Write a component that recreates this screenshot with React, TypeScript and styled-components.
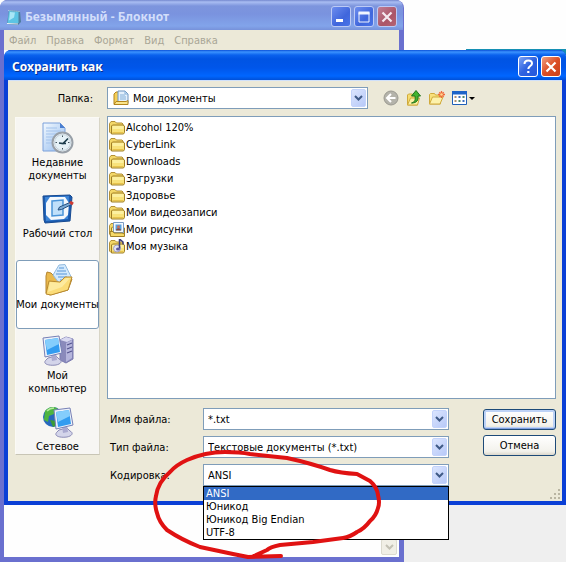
import React from "react";
import styled, { createGlobalStyle, css } from "styled-components";

const GlobalStyle = createGlobalStyle`
  * { box-sizing: border-box; }
  body {
    margin: 0;
    font: 11px/13px "DejaVu Sans Condensed", "Noto Sans", sans-serif;
    color: #000;
  }
  button, input, select { font: inherit; color: inherit; }
`;

/* ---------- desktop and windows ---------- */

const Desktop = styled.main`
  position: relative;
  min-height: 100vh;
  overflow: hidden;
  background: linear-gradient(#fefefe 500px, #efefef 500px);
`;

const Taskline = styled.div`
  position: absolute;
  top: 49px;
  right: 0;
  width: 100px;
  height: 6px;
  background: #1590b4;
`;

const NotepadWindow = styled.section`
  display: flex;
  flex-direction: column;
  width: calc(100% - 162px);
  height: 100vh;
  min-height: 562px;
  border: solid #6a70cf;
  border-width: 0 5px 5px 4px;
  border-radius: 8px 8px 0 0;
  background: #6a70cf;
`;

const DialogWindow = styled.section`
  position: absolute;
  top: 50px;
  left: 4px;
  right: 0;
  border: solid #0a3fd6;
  border-width: 0 4px 4px;
  border-radius: 7px 7px 0 0;
  background: #0a3fd6;
`;

const TitleBar = styled.header<{ $active?: boolean }>`
  display: flex;
  align-items: center;
  gap: 3px;
  height: 30px;
  margin: 0 -4px;
  border-radius: 7px 7px 0 0;
  ${(p) =>
    p.$active
      ? css`
          padding: 3px 5px 0 8px;
          background: linear-gradient(#0a50d8, #3b93ff 2px, #0a62ee 5px, #0054e3 9px, #0056ea 18px, #0066ff 26px, #0050d8);
        `
      : css`
          padding: 3px 6px 0;
          background: linear-gradient(#7488cf, #a9bdf2 2px, #7d95dd 6px, #7a93df 14px, #82a4ea 26px, #7792da);
        `}
`;

const Title = styled.h1<{ $active?: boolean }>`
  flex: 1;
  margin: 0;
  font: bold 12px/18px "Noto Sans", sans-serif;
  white-space: nowrap;
  color: ${(p) => (p.$active ? "#fff" : "#d3defa")};
  text-shadow: ${(p) => (p.$active ? "1px 1px #0a2f8c" : "none")};
`;

const CaptionButton = styled.button<{ $kind: "dim" | "dimClose" | "blue" | "red" }>`
  display: grid;
  place-items: center;
  width: 20px;
  height: 21px;
  padding: 0;
  border: 1px solid ${(p) => (p.$kind.startsWith("dim") ? "#bccaf5" : "#fff")};
  border-radius: 3px;
  background: ${(p) =>
    ({
      dim: "linear-gradient(135deg, #6d8dee, #3f66dc 60%, #4a74e8)",
      dimClose: "linear-gradient(135deg, #c07e95, #ab5568 60%, #b56475)",
      blue: "linear-gradient(135deg, #7ea4f5, #2f62e0 50%, #2458dc)",
      red: "linear-gradient(135deg, #f0a083, #dc4e26 50%, #c9401a)",
    })[p.$kind]};
`;

const MenuBar = styled.nav`
  display: flex;
  gap: 10px;
  height: 20px;
  padding: 3px 5px;
  background: #ece9d8;
`;

const MenuItem = styled.button`
  padding: 0;
  border: 0;
  background: none;
  color: #a9a696;
`;

const TextArea = styled.div`
  display: flex;
  flex: 1;
  align-items: flex-end;
  justify-content: flex-end;
  padding: 2px;
  background: #fefefe;
`;

const ScrollDown = styled.button`
  display: grid;
  place-items: center;
  width: 16px;
  height: 16px;
  padding: 0;
  border: 1px solid #dcdace;
  border-radius: 2px;
  background: #f1efe6;
`;

/* ---------- dialog contents ---------- */

const DialogBody = styled.form`
  display: grid;
  grid-template-columns: 85px 1fr;
  column-gap: 7px;
  row-gap: 7px;
  padding: 7px 6px 15px 7px;
  background: #ece9d8;
  box-shadow: inset 0 1px #cfe0fa;
`;

const LookInLabel = styled.label`
  align-self: center;
  justify-self: end;
  padding-right: 7px;
`;

const LookInRow = styled.div`
  display: flex;
  align-items: center;
  gap: 15px;
`;

const Combo = styled.div`
  display: grid;
  flex: 1;
  align-items: center;
  height: 22px;
  border: 1px solid #7f9db9;
  background: #fff;
  > * { grid-area: 1 / 1; }
`;

const LookInCombo = styled(Combo)`
  max-width: 261px;
`;

const ComboIcon = styled.span`
  display: flex;
  padding-left: 5px;
  pointer-events: none;
`;

const fieldText = css<{ $iconed?: boolean }>`
  width: 100%;
  height: 20px;
  padding: 0 20px 0 ${(p) => (p.$iconed ? 25 : 4)}px;
  border: 0;
  outline: 0;
  background: transparent;
`;

const Select = styled.select`
  ${fieldText}
  appearance: none;
`;

const TextInput = styled.input`
  ${fieldText}
`;

const Arrow = styled.span`
  display: grid;
  place-items: center;
  justify-self: end;
  width: 15px;
  height: 18px;
  margin-right: 1px;
  border: 1px solid #c3d3fb;
  border-radius: 2px;
  background: linear-gradient(135deg, #dbe5fe, #b7c9f8);
  pointer-events: none;
`;

const Tools = styled.div`
  display: flex;
  align-items: center;
  gap: 7px;
  margin-right: auto;
`;

const ToolButton = styled.button`
  display: flex;
  padding: 0;
  border: 0;
  background: none;
`;

const Places = styled.nav`
  display: flex;
  flex-direction: column;
  gap: 2px;
  grid-row: 2 / 4;
  align-self: start;
  margin-top: 1px;
  border: 1px solid #fff;
  border-color: #fbfaf5 #d8d5c6 #c8c5b5 #fbfaf5;
  background: #f7f6f3;
`;

const Place = styled.button<{ $selected?: boolean }>`
  display: flex;
  flex-direction: column;
  align-items: center;
  gap: 2px;
  min-height: 69px;
  padding: 3px 0 0;
  border: 1px solid ${(p) => (p.$selected ? "#7f9db9" : "transparent")};
  border-radius: 3px;
  background: ${(p) => (p.$selected ? "#fff" : "none")};
  white-space: pre;
  &:last-child { min-height: 0; }
`;

const FileList = styled.ul`
  height: 283px;
  margin: 0;
  padding: 2px 1px;
  border: 1px solid #7f9db9;
  background: #fff;
  list-style: none;
`;

const FileItem = styled.li`
  display: flex;
  align-items: center;
  gap: 1px;
  height: 17px;
`;

const Footer = styled.div`
  display: grid;
  grid-template-columns: 1fr 73px;
  column-gap: 34px;
  padding-top: 2px;
`;

const Fields = styled.div`
  display: grid;
  grid-template-columns: 93px 1fr;
  row-gap: 6px;
  align-items: center;
  padding-left: 3px;
`;

const EncodingCell = styled.div`
  position: relative;
`;

const OptionList = styled.ul`
  position: absolute;
  z-index: 1;
  top: 100%;
  left: 0;
  right: 0;
  margin: 0;
  padding: 0;
  border: 1px solid #000;
  background: #fff;
  list-style: none;
`;

const OptionItem = styled.li<{ $selected?: boolean }>`
  height: 13px;
  padding-left: 2px;
  background: ${(p) => (p.$selected ? "#316ac5" : "#fff")};
  color: ${(p) => (p.$selected ? "#fff" : "#000")};
`;

const Actions = styled.div`
  display: flex;
  flex-direction: column;
  gap: 5px;
  padding-top: 1px;
`;

const PushButton = styled.button<{ $primary?: boolean }>`
  height: 21px;
  padding: 0;
  border: 1px solid #1d4a78;
  border-radius: 3px;
  background: linear-gradient(#fff, #f3f2ec 80%, #dcd8cc);
  box-shadow: ${(p) => (p.$primary ? "inset 0 -1px #7f9fe0, inset 0 0 0 2px #bdd2f6" : "none")};
`;

const Grip = styled.svg`
  position: absolute;
  right: 1px;
  bottom: 1px;
`;

const Marker = styled.svg`
  position: absolute;
  z-index: 2;
  top: 395px;
  left: 142px;
  pointer-events: none;
`;

/* ---------- icons ---------- */

const Chevron = ({ color = "#3f5a86" }: { color?: string }) => (
  <svg width="9" height="6" viewBox="0 0 9 6">
    <path d="M1 1l3.5 3.5L8 1" fill="none" stroke={color} strokeWidth="2" />
  </svg>
);

const CloseGlyph = ({ color = "#fff" }: { color?: string }) => (
  <svg width="12" height="12" viewBox="0 0 12 12">
    <path d="M1.5 1.5l9 9M10.5 1.5l-9 9" stroke={color} strokeWidth="2.2" />
  </svg>
);

const NotepadIcon = () => (
  <svg width="16" height="16" viewBox="0 0 16 16">
    <path d="M3 1l11 1 1 11-3 3-11-1z" fill="#4e7e9e" />
    <path d="M3 2l9.500 1v11l-11 0z" fill="#5cc4e4" />
    <path d="M4 3l5 .5-1 5-5 3z" fill="#a8e6f6" />
    <path d="M2.500 1.500l11 1" stroke="#d7f3fb" strokeDasharray="1 1" />
    <path d="M1 14.500l11 .5" stroke="#e8f2f6" />
  </svg>
);

const FolderIcon = ({ kind }: { kind: string }) => (
  <svg width="16" height="16" viewBox="0 0 16 16">
    <path d="M.5 12V3.500l1.500-2h4l1.500 1.500h5.500l1 1v8l-1 1.500H2z" fill="#f3d768" stroke="#b39036" />
    <path d="M2.500 13V6l1-1h10.500l1.500 1v6.500l-1 1.500H2.500z" fill="#f8e27a" stroke="#a07f26" />
    <path d="M3.500 6h11v3h-11z" fill="#fcf0a0" />
    <path d="M3.500 12.500h11" stroke="#e8c34c" />
    {kind === "pictures" && (
      <>
        <path d="M4.500.5h10v10h-10z" fill="#f4f9ff" stroke="#7b9cc4" />
        <path d="M6.500 2.500h6v6h-6z" fill="#5aa2dc" />
        <circle cx="9.500" cy="4.800" r="1.500" fill="#c8705a" />
        <path d="M7 8.500c0-3 5-3 5 0z" fill="#8f4c3c" />
        <path d="M1 9.500h3l1 1.500h8l2.500 1v2.500H1.500z" fill="#f5d968" stroke="#a07f26" />
      </>
    )}
    {kind === "music" && (
      <>
        <circle cx="8" cy="9.500" r="3.500" fill="#e2e2f4" stroke="#a2a0c4" />
        <path d="M10.500 9.500V0l3.500 3v2.500" fill="none" stroke="#3c3c78" strokeWidth="1.500" />
        <ellipse cx="9" cy="10" rx="2" ry="1.500" fill="#5a58a0" />
      </>
    )}
  </svg>
);

const DocumentsSmallIcon = () => (
  <svg width="16" height="16" viewBox="0 0 16 16">
    <path d="M1 14V4l2-2h3v11z" fill="#f5cf58" stroke="#b3851c" />
    <path d="M5 1h7l3 3v9H5z" fill="#e3f0fc" stroke="#6d94c0" />
    <path d="M12 1v3h3M7 5h5M7 7h6M7 9h6" fill="none" stroke="#83afd8" />
    <path d="M1 14.5l2-3h10l2-1v4z" fill="#fae489" stroke="#b3851c" />
  </svg>
);

const BackIcon = () => (
  <svg width="16" height="16" viewBox="0 0 16 16">
    <circle cx="8" cy="8" r="7" fill="#b4b3aa" stroke="#9b9a91" />
    <path d="M12.500 8H4.500M8 4L4 8l4 4" fill="none" stroke="#fff" strokeWidth="2" />
  </svg>
);

const UpIcon = () => (
  <svg width="16" height="16" viewBox="0 0 16 16">
    <path d="M1.500 15V5l1-1h4l1 1h4v10z" fill="#f6dc70" stroke="#d0aa3c" />
    <path d="M1.500 15l3-7h9l-2 7z" fill="#fbf0a0" stroke="#d0aa3c" />
    <path d="M5.500 13c4-1 4-4 3.500-7H5.500L10 .5l4.500 5.500h-2.500c.5 4-1 7-6.500 7z" fill="#43b430" stroke="#1f7319" />
  </svg>
);

const NewFolderIcon = () => (
  <svg width="16" height="16" viewBox="0 0 16 16">
    <path d="M.5 14V4.500l1-1h4l1 1.500h5v9z" fill="#f8e07c" stroke="#d0aa3c" />
    <path d="M.5 14l3-7h10.500l-3 7z" fill="#fdf2ac" stroke="#d0aa3c" />
    <path d="M12.500 1v7M9 4.500h7M10.300 2.300l4.400 4.400M14.700 2.300l-4.400 4.400" stroke="#f0693a" strokeWidth="1.300" />
    <circle cx="12.500" cy="4.500" r="1.300" fill="#ffd890" />
  </svg>
);

const ViewIcon = () => (
  <svg width="23" height="16" viewBox="0 0 23 16">
    <path d="M.5 1.500h14v13H.5z" fill="#fff" stroke="#1f5fb8" />
    <path d="M0 1h15v3.500H0z" fill="#1d64c8" />
    <path d="M2.500 7h2M2.500 11h2" stroke="#b09070" strokeWidth="2" />
    <path d="M6.500 7h2M10.500 11h2" stroke="#3d6fc0" strokeWidth="2" />
    <path d="M10.500 7h2M6.500 11h2" stroke="#4c8a6c" strokeWidth="2" />
    <path d="M17 7h6l-3 3z" fill="#000" />
  </svg>
);

const RecentIcon = () => (
  <svg width="32" height="32" viewBox="0 0 32 32">
    <defs>
      <linearGradient id="paper" x2="1" y2="1">
        <stop stopColor="#f4faff" />
        <stop offset="1" stopColor="#8fb9ee" />
      </linearGradient>
    </defs>
    <path d="M1 1h17l5 5v23H1z" fill="url(#paper)" stroke="#7aa0da" />
    <path d="M18 1v5h5z" fill="#4b7fd0" />
    <path d="M4 6h11M4 9h15M4 12h11M4 15h8M4 18h6M4 21h6" stroke="#a3c3ec" />
    <circle cx="20.500" cy="20.500" r="10" fill="#f2f7f9" stroke="#98a0a8" strokeWidth="2" />
    <circle cx="20.500" cy="20.500" r="8" fill="#e6f2f7" stroke="#c5d3dc" />
    <path d="M20.500 13.500v1.500M20.500 26v1.500M13.500 20.500h1.500M26 20.500h1.500" stroke="#44545f" />
    <path d="M17 21l4 .5 5-5M21 21.500l3 0" fill="none" stroke="#1d3d4c" strokeWidth="1.700" />
  </svg>
);

const DesktopIcon = () => (
  <svg width="32" height="32" viewBox="0 0 32 32">
    <path d="M1 3l27-1 2 2-2 24-25 2-1-3z" fill="#1b5cb0" stroke="#174a91" />
    <path d="M3 4l24-1-1 23-22 2z" fill="#3c84d6" />
    <path d="M8 4h15l4 6-1 12-4 4-13 1-5-5V10z" fill="#f4f8fc" />
    <path d="M10 8l11-1v15l-11 1z" fill="#c0e0fa" stroke="#4a94d8" strokeWidth="1.500" />
    <path d="M16 17l1.500-3L29 9l1.500 2-11 5.500z" fill="#7aa9d4" stroke="#26507e" />
    <path d="M28 9l3 2" stroke="#cf3a33" strokeWidth="3" />
  </svg>
);

const DocumentsIcon = () => (
  <svg width="32" height="32" viewBox="0 0 32 32">
    <path d="M4 29V12l1-4 4 1 3 3 14 1 4 2-4 11-18 5z" fill="#eab94c" stroke="#b5852e" />
    <path d="M17 1l6-.5 6 12L20 23l-9-12z" fill="#d3e9fc" stroke="#93bbdf" />
    <path d="M17 4l5 0M15 7l9 0M14 10l11 0M16 13l9 0M18 16l5 0" stroke="#80b1e3" strokeWidth="1.300" />
    <path d="M4 30l3-13 11 1 5-5 7 0-4 13-17 5z" fill="#fbdc78" stroke="#b88a31" />
    <path d="M6 28l2-10 10 1 6-5 4 0-8 9z" fill="#fdea9f" />
  </svg>
);

const Monitor = () => (
  <>
    <path d="M6 23l8-2 3 3c4 2 2 5-3 6-7 1-14-1-10-5z" fill="#d4d5ea" stroke="#8c8cb6" />
    <path d="M9 19l5-1 1 7-5 1z" fill="#aaaad0" />
    <path d="M1 3l16-2 3 17-17 4z" fill="#eef2fb" stroke="#7680b5" />
    <path d="M3 5l13-2 2 14-13 3z" fill="#329cf0" />
    <path d="M3 5l13-2 1 6-12 6z" fill="#84cdfc" />
  </>
);

const ComputerIcon = () => (
  <svg width="32" height="32" viewBox="0 0 32 32">
    <path d="M18 5l6-3 7 2v20l-7 4-6-3z" fill="#8a8abb" stroke="#7a7ab0" />
    <path d="M18 5l6-3 7 2-6 3z" fill="#d8d8f0" />
    <path d="M24 8l6-3v18l-6 4z" fill="#b5b5dc" />
    <path d="M25 10l5-2M25 14l5-2M25 18l5-2" stroke="#54548e" strokeWidth="1.200" />
    <Monitor />
  </svg>
);

const NetworkIcon = () => (
  <svg width="32" height="32" viewBox="0 0 32 32">
    <circle cx="11" cy="11" r="10" fill="#2768bd" />
    <path d="M3 5c4-5 10-5 13-2l-4 5-5 2-1 6-4-2z" fill="#4eb540" />
    <path d="M8 14l6 1 2 4-5 2z" fill="#3b9b38" />
    <path d="M5 5c2-2 4-3 7-3" stroke="#b4eb9d" strokeWidth="1.500" fill="none" />
    <g transform="translate(11 1)">
      <Monitor />
    </g>
  </svg>
);

/* ---------- data ---------- */

const menu = ["Файл", "Правка", "Формат", "Вид", "Справка"];

const places = [
  { label: "Недавние\nдокументы", Icon: RecentIcon },
  { label: "Рабочий стол", Icon: DesktopIcon },
  { label: "Мои документы", Icon: DocumentsIcon, selected: true },
  { label: "Мой\nкомпьютер", Icon: ComputerIcon },
  { label: "Сетевое", Icon: NetworkIcon },
];

const files = [
  { name: "Alcohol 120%", kind: "folder" },
  { name: "CyberLink", kind: "folder" },
  { name: "Downloads", kind: "folder" },
  { name: "Загрузки", kind: "folder" },
  { name: "Здоровье", kind: "folder" },
  { name: "Мои видеозаписи", kind: "folder" },
  { name: "Мои рисунки", kind: "pictures" },
  { name: "Моя музыка", kind: "music" },
];

const encodings = ["ANSI", "Юникод", "Юникод Big Endian", "UTF-8"];

export default function App() {
  return (
    <Desktop>
      <GlobalStyle />
      <Taskline />
      <NotepadWindow aria-label="Блокнот">
        <TitleBar>
          <NotepadIcon />
          <Title>Безымянный - Блокнот</Title>
          <CaptionButton $kind="dim" aria-label="Свернуть">
            <svg width="12" height="12" viewBox="0 0 12 12">
              <path d="M1 9.500h7" stroke="#fff" strokeWidth="3" />
            </svg>
          </CaptionButton>
          <CaptionButton $kind="dim" aria-label="Развернуть">
            <svg width="12" height="12" viewBox="0 0 12 12">
              <path d="M1 1.500h10v9.500H1z" fill="none" stroke="#f1f5ff" />
              <path d="M.5 2h11" stroke="#f1f5ff" strokeWidth="3" />
            </svg>
          </CaptionButton>
          <CaptionButton $kind="dimClose" aria-label="Закрыть Блокнот">
            <CloseGlyph color="#f5e8f0" />
          </CaptionButton>
        </TitleBar>
        <MenuBar>
          {menu.map((item) => (
            <MenuItem key={item}>{item}</MenuItem>
          ))}
        </MenuBar>
        <TextArea>
          <ScrollDown aria-label="Прокрутить вниз">
            <Chevron color="#c3c1b4" />
          </ScrollDown>
        </TextArea>
      </NotepadWindow>

      <DialogWindow role="dialog" aria-label="Сохранить как">
        <TitleBar $active>
          <Title $active>Сохранить как</Title>
          <CaptionButton $kind="blue" aria-label="Справка">
            <svg width="12" height="15" viewBox="0 0 12 15">
              <path d="M2.500 5c0-5 7.500-4.500 7.500-.5C10 7 6.300 7 6.300 10" fill="none" stroke="#fff" strokeWidth="2" />
              <path d="M5.200 12h2.200v2H5.200z" fill="#fff" />
            </svg>
          </CaptionButton>
          <CaptionButton $kind="red" aria-label="Закрыть">
            <CloseGlyph />
          </CaptionButton>
        </TitleBar>

        <DialogBody onSubmit={(e) => e.preventDefault()}>
          <LookInLabel htmlFor="look-in">Папка:</LookInLabel>
          <LookInRow>
            <LookInCombo>
              <ComboIcon>
                <DocumentsSmallIcon />
              </ComboIcon>
              <Select id="look-in" $iconed>
                <option>Мои документы</option>
              </Select>
              <Arrow>
                <Chevron />
              </Arrow>
            </LookInCombo>
            <Tools>
              <ToolButton type="button" aria-label="Назад"><BackIcon /></ToolButton>
              <ToolButton type="button" aria-label="На один уровень вверх"><UpIcon /></ToolButton>
              <ToolButton type="button" aria-label="Создать папку"><NewFolderIcon /></ToolButton>
              <ToolButton type="button" aria-label="Вид списка"><ViewIcon /></ToolButton>
            </Tools>
          </LookInRow>

          <Places>
            {places.map(({ label, Icon, selected }) => (
              <Place key={label} type="button" $selected={selected}>
                <Icon />
                {label}
              </Place>
            ))}
          </Places>

          <FileList>
            {files.map((file) => (
              <FileItem key={file.name}>
                <FolderIcon kind={file.kind} />
                {file.name}
              </FileItem>
            ))}
          </FileList>

          <Footer>
            <Fields>
              <label htmlFor="file-name">Имя файла:</label>
              <Combo>
                <TextInput id="file-name" defaultValue="*.txt" />
                <Arrow><Chevron /></Arrow>
              </Combo>
              <label htmlFor="file-type">Тип файла:</label>
              <Combo>
                <Select id="file-type">
                  <option>Текстовые документы (*.txt)</option>
                </Select>
                <Arrow><Chevron /></Arrow>
              </Combo>
              <label htmlFor="encoding">Кодировка:</label>
              <EncodingCell>
                <Combo>
                  <Select id="encoding">
                    {encodings.map((name) => (
                      <option key={name}>{name}</option>
                    ))}
                  </Select>
                  <Arrow><Chevron /></Arrow>
                </Combo>
                <OptionList role="listbox" aria-label="Кодировка">
                  {encodings.map((name, i) => (
                    <OptionItem key={name} role="option" aria-selected={i === 0} $selected={i === 0}>
                      {name}
                    </OptionItem>
                  ))}
                </OptionList>
              </EncodingCell>
            </Fields>
            <Actions>
              <PushButton $primary>Сохранить</PushButton>
              <PushButton type="button">Отмена</PushButton>
            </Actions>
          </Footer>
        </DialogBody>

        <Grip width="12" height="12" viewBox="0 0 12 12">
          <path d="M9 1h2v2H9zM9 5h2v2H9zM9 9h2v2H9zM5 5h2v2H5zM5 9h2v2H5zM1 9h2v2H1z" fill="#b9b5a2" />
        </Grip>

        <Marker width="240" height="118" viewBox="150 445 240 118">
          <path
            d="M281 556L248 557L233 554L200 547Q182 540 167 530Q159 522 157 513Q154 504 156 496Q158 482 170 472Q176 465 187 460Q205 452 225 452Q240 452 250 454L287 458Q310 463 330 470Q340 473 357 474L370 481Q377 487 378 495Q380 503 378 508Q376 516 370 521Q364 529 357 532Q350 537 343 538L313 542L280 545Q270 547 267 550L252 557"
            fill="none"
            stroke="#e01212"
            strokeWidth="4"
            strokeLinecap="round"
            strokeLinejoin="round"
          />
        </Marker>
      </DialogWindow>
    </Desktop>
  );
}
